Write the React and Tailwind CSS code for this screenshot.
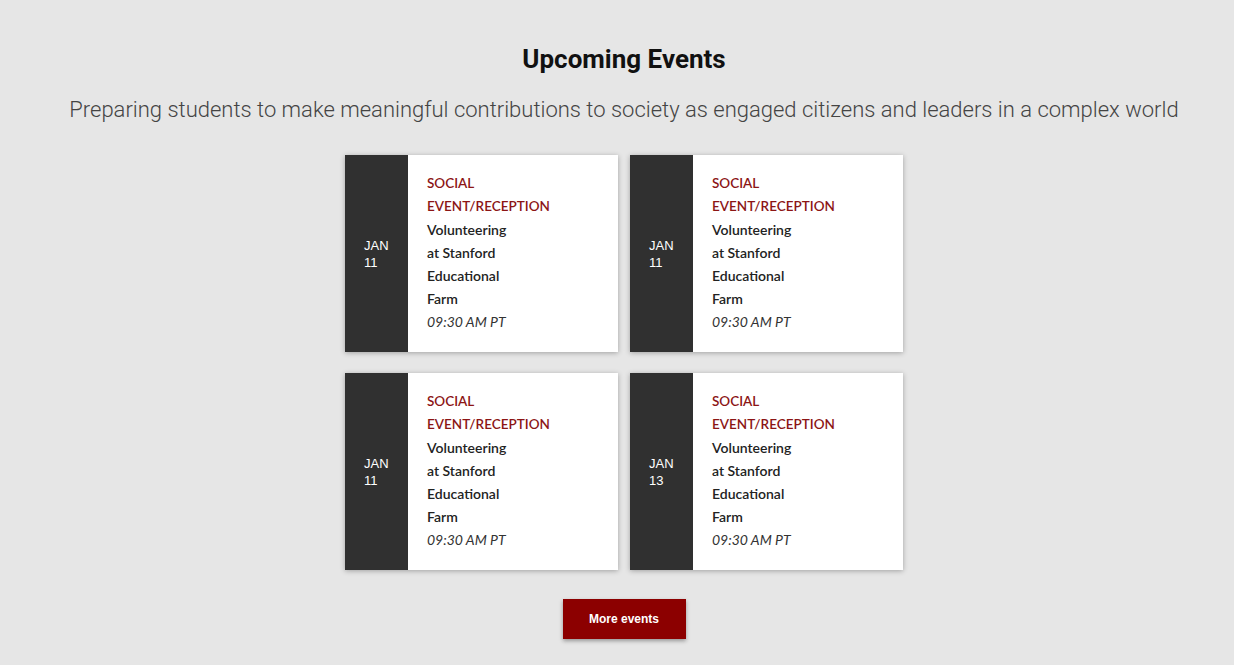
import React from "react";

const events = [
  { m: "JAN", d: "11" },
  { m: "JAN", d: "11" },
  { m: "JAN", d: "11" },
  { m: "JAN", d: "13" },
];

function Card({ m, d }) {
  return (
    <div className="flex w-[273px] h-[197px] bg-white shadow-[0_1px_5px_rgba(0,0,0,0.3)]">
      <div className="w-[63px] shrink-0 bg-[#303030] flex flex-col justify-center pl-[19px] text-white text-[13px] leading-[17px] font-['Liberation_Sans',sans-serif]">
        <span>{m}</span>
        <span>{d}</span>
      </div>
      <div className="ml-[19px] pt-[17px] w-[90px] text-[14px] leading-[23px] font-['Lato',sans-serif] whitespace-normal">
        <div className="text-[#8c1515] font-semibold text-[13.5px]">SOCIAL EVENT/RECEPTION</div>
        <div className="text-[#222] font-semibold">Volunteering at Stanford Educational Farm</div>
        <div className="text-[#333] italic whitespace-nowrap">09:30 AM PT</div>
      </div>
    </div>
  );
}

export default function App() {
  return (
    <div className="min-h-[665px] bg-[#e6e6e6] flex flex-col items-center pt-[43px] pl-[14px] font-['Roboto',sans-serif]">
      <h2 className="text-[26px] leading-[32px] font-bold text-[#111]">Upcoming Events</h2>
      <p className="mt-[20px] text-[22px] leading-[30px] font-light text-[#444]">
        Preparing students to make meaningful contributions to society as engaged citizens and leaders in a complex world
      </p>
      <div className="mt-[30px] grid grid-cols-2 gap-x-[12px] gap-y-[21px]">
        {events.map((e, i) => (
          <Card key={i} {...e} />
        ))}
      </div>
      <button className="mt-[29px] w-[123px] h-[40px] bg-[#8c0000] text-white text-[12px] font-bold font-['Liberation_Sans',sans-serif] shadow-[0_2px_4px_rgba(0,0,0,0.35)]">
        More events
      </button>
    </div>
  );
}
